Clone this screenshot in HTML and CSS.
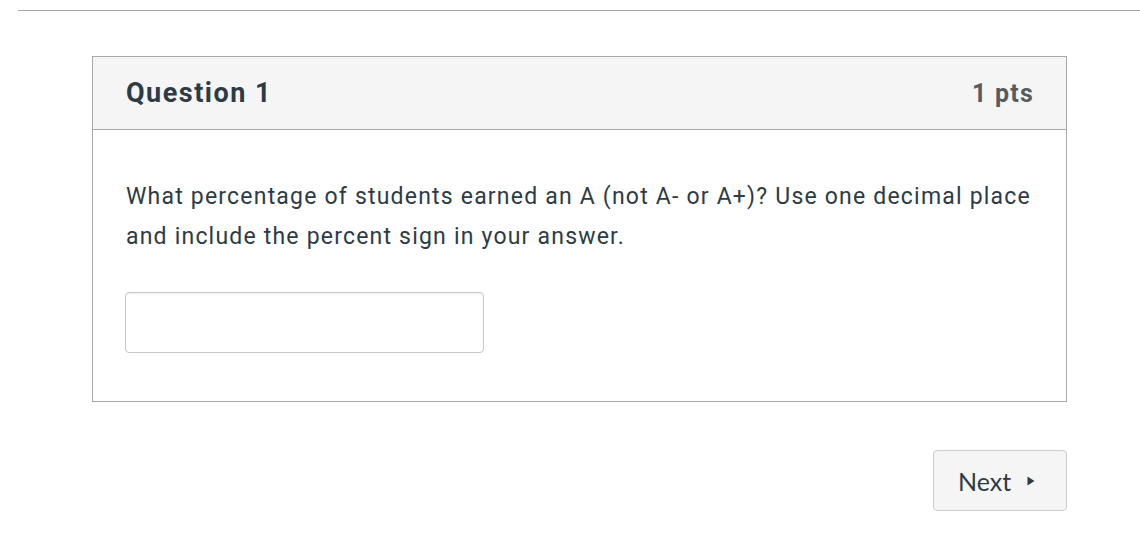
FILE: index.html
```html
<!DOCTYPE html>
<html>
<head>
<meta charset="utf-8">
<link rel="stylesheet" href="styles.css">
</head>
<body>
<div class="page">
  <hr class="rule">
  <div class="content">
    <section class="question">
      <header class="q-header">
        <h2 class="q-title">Question 1</h2>
        <span class="q-pts">1 pts</span>
      </header>
      <div class="q-body">
        <p class="q-text">What percentage of students earned an A (not A- or A+)? Use one decimal place and include the percent sign in your answer.</p>
        <input class="q-input" type="text">
      </div>
    </section>
    <div class="nav">
      <button class="next-btn">Next <svg class="tri" width="8" height="10" viewBox="0 0 8 10"><path d="M0.5 0.5 L7.5 5 L0.5 9.5 Z" fill="#2d3b45"/></svg></button>
    </div>
  </div>
</div>
</body>
</html>
```

FILE: styles.css
```css
html, body {
  margin: 0;
  padding: 0;
  background: #fff;
}
.page {
  padding-top: 10px;
  padding-left: 18px;
}
.rule {
  margin: 0;
  border: 0;
  border-top: 1px solid #a8a8a8;
  height: 0;
}
.content {
  padding-left: 74px;
  padding-top: 45px;
  width: 975px;
}
.question {
  border: 1px solid #a9a9a9;
  font-family: Roboto, "Liberation Sans", sans-serif;
  color: #2d3b45;
}
.q-header {
  display: flex;
  justify-content: space-between;
  align-items: center;
  height: 72px;
  padding: 0 33px;
  background: #f5f5f5;
  border-bottom: 1px solid #a9a9a9;
}
.q-title {
  margin: 0;
  font-size: 27px;
  font-weight: 700;
  letter-spacing: 1.5px;
  color: #2d3b45;
}
.q-pts {
  font-size: 25px;
  font-weight: 700;
  letter-spacing: 1.2px;
  margin-right: -1px;
  color: #555b5e;
}
.q-body {
  padding: 47px 16px 48px 33px;
}
.q-text {
  margin: 0 0 35px;
  font-size: 23px;
  line-height: 40px;
  letter-spacing: 1.2px;
  color: #2d3b45;
}
.q-input {
  display: block;
  box-sizing: border-box;
  width: 359px;
  height: 61px;
  margin: 0 0 0 -1px;
  border: 1px solid #c8c8c8;
  border-radius: 4px;
  box-shadow: inset 0 1px 2px rgba(0,0,0,0.06);
  background: #fff;
}
.nav {
  display: flex;
  justify-content: flex-end;
  padding-top: 48px;
}
.next-btn {
  display: flex;
  align-items: center;
  gap: 16px;
  box-sizing: border-box;
  height: 61px;
  width: 134px;
  padding: 0 0 0 24px;
  background: #f5f5f5;
  border: 1px solid #c7cdd1;
  border-radius: 4px;
  font-family: Lato, "Liberation Sans", sans-serif;
  font-size: 25px;
  color: #2d3b45;
}
.tri {
  width: 8px;
  height: 10px;
}
```
